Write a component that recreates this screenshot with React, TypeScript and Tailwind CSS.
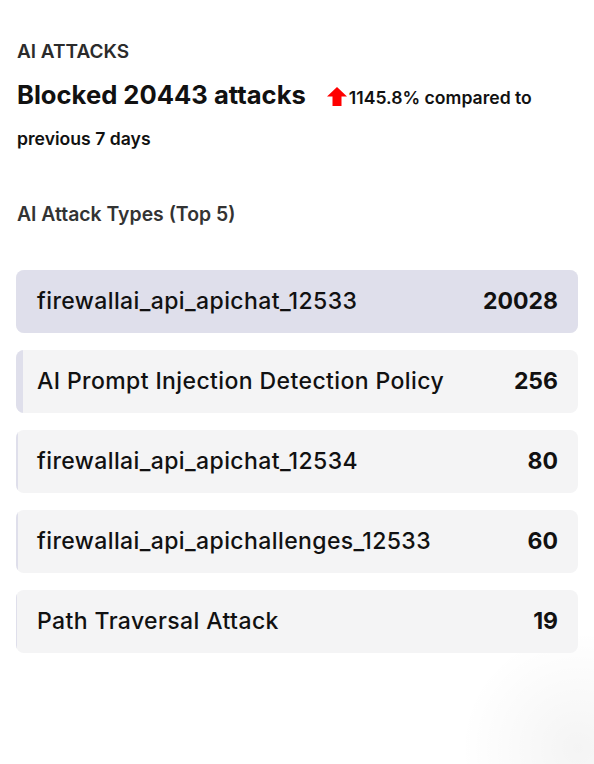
const attackTypes = [
  { name: 'firewallai_api_apichat_12533', count: 20028 },
  { name: 'AI Prompt Injection Detection Policy', count: 256 },
  { name: 'firewallai_api_apichat_12534', count: 80 },
  { name: 'firewallai_api_apichallenges_12533', count: 60 },
  { name: 'Path Traversal Attack', count: 19 },
];

function UpArrow() {
  return (
    <svg width="20" height="19" viewBox="0 0 20 19" className="mb-[-2px] mr-[2px] inline-block align-baseline">
      <path d="M10 0 L20 9.5 L14.5 9.5 L14.5 19 L5.5 19 L5.5 9.5 L0 9.5 Z" fill="#ff0000" />
    </svg>
  );
}

export default function App() {
  const max = Math.max(...attackTypes.map((a) => a.count));

  return (
    <div
      className="relative min-h-[764px] w-full overflow-hidden bg-white px-4 pt-[38px] text-[#111]"
      style={{ fontFamily: 'Inter, "Noto Sans", sans-serif' }}
    >
      <div className="pointer-events-none absolute -bottom-28 -right-28 h-64 w-64 rounded-full bg-[radial-gradient(circle,rgba(0,0,0,0.045)_0%,rgba(0,0,0,0)_65%)]" />

      <div className="relative">
        <p className="pl-[1px] text-[19px] font-semibold leading-[28px] text-[#2b2b2b]">AI ATTACKS</p>

        <h2 className="mt-[8px] pl-[1px] text-[25.6px] font-bold leading-[41px] text-[#111]">
          Blocked 20443 attacks
          <span className="ml-[21px] text-[17.6px] font-semibold leading-none">
            <UpArrow />
            1145.8% compared to previous 7 days
          </span>
        </h2>

        <p className="mt-[46px] pl-[1px] text-[19.4px] font-semibold leading-[24px] text-[#333]">
          AI Attack Types (Top 5)
        </p>

        <div className="mt-[44px] flex w-[562px] flex-col gap-[17px]">
          {attackTypes.map((a) => (
            <div key={a.name} className="relative h-[63px] overflow-hidden rounded-lg bg-[#f4f4f5]">
              <div
                className="absolute inset-y-0 left-0 bg-[#dfdfeb]"
                style={{ width: `${(a.count / max) * 100}%` }}
              />
              <div className="relative flex h-full items-center justify-between pl-[21px] pr-[20px] text-[23px] tracking-[0.4px]">
                <span className="font-medium text-[#111]">{a.name}</span>
                <span className="font-bold tracking-normal text-[#111]">{a.count}</span>
              </div>
            </div>
          ))}
        </div>
      </div>
    </div>
  );
}
